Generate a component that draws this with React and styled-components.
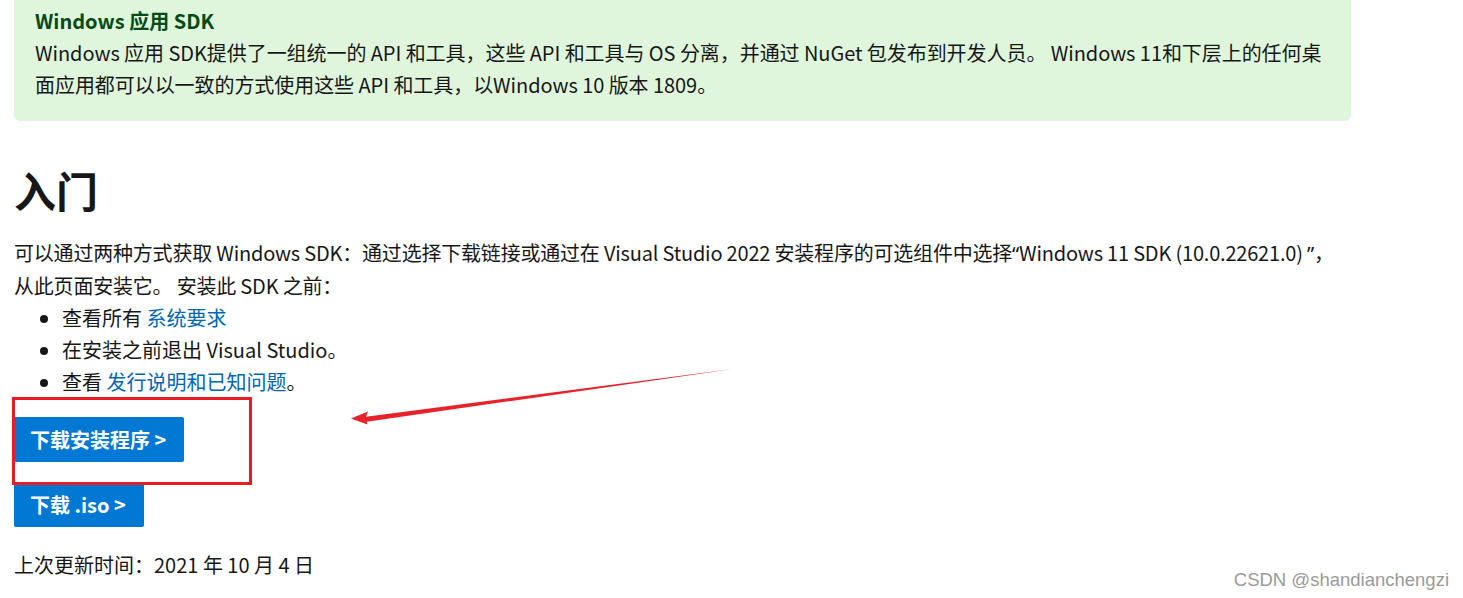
import styled, { createGlobalStyle } from 'styled-components';

const GlobalStyles = createGlobalStyle`
    html, body {
        margin: 0;
        padding: 0;
        background: #ffffff;
    }
    body {
        font-family: 'Noto Sans CJK SC', 'Noto Sans', sans-serif;
        color: #171717;
    }
`;

const App = () => {
    return (
        <>
            <GlobalStyles />
            <Page>
                <Alert>
                    <AlertTitle>Windows 应用 SDK</AlertTitle>
                    <AlertText>
                        Windows 应用 SDK提供了一组统一的 API 和工具，这些 API 和工具与 OS 分离，并通过 NuGet 包发布到开发人员。 Windows 11和下层上的任何桌
                        <br />
                        面应用都可以以一致的方式使用这些 API 和工具，以Windows 10 版本 1809。
                    </AlertText>
                </Alert>

                <Heading>入门</Heading>
                <Paragraph>
                    可以通过两种方式获取 Windows SDK：通过选择下载链接或通过在 Visual Studio 2022 安装程序的可选组件中选择<Quote>“</Quote>Windows 11 SDK (10.0.22621.0) <Quote>”</Quote>，
                    <br />
                    从此页面安装它。 安装此 SDK 之前：
                </Paragraph>
                <List>
                    <li>
                        查看所有 <Link href="#">系统要求</Link>
                    </li>
                    <li>在安装之前退出 Visual Studio。</li>
                    <li>
                        查看 <Link href="#">发行说明和已知问题</Link>。
                    </li>
                </List>

                <Buttons>
                    <Button href="#">下载安装程序 &gt;</Button>
                    <Button href="#">下载 .iso &gt;</Button>
                </Buttons>

                <Updated>上次更新时间：2021 年 10 月 4 日</Updated>

                <Highlight />
                <Arrow width="400" height="70" viewBox="0 0 400 70">
                    <path d="M383 1 L14 49 L15 54 Z" fill="#e8222a" />
                    <path d="M1 50.5 L18 43.5 L15.5 50 L17.5 56.5 Z" fill="#e8222a" />
                </Arrow>
                <Watermark>CSDN @shandianchengzi</Watermark>
            </Page>
        </>
    );
};

export default App;

const Page = styled.main`
    position: relative;
    width: 1463px;
    height: 598px;
    overflow: hidden;
    padding: 0 14px;
    box-sizing: border-box;
    font-size: 20px;
    line-height: 32px;
`;

const Alert = styled.section`
    margin-top: -8px;
    width: 1337px;
    box-sizing: border-box;
    padding: 13px 21px 20px 21px;
    background-color: #dff6dd;
    border-radius: 6px;
`;

const AlertTitle = styled.p`
    margin: 0;
    color: #054b16;
    font-weight: 600;
`;

const AlertText = styled.p`
    margin: 0;
    white-space: nowrap;
    letter-spacing: -0.06px;
`;

const Heading = styled.h1`
    margin: 41px 0 20px 0;
    font-size: 42px;
    line-height: 55px;
    font-weight: 700;
    color: #171717;
`;

const Paragraph = styled.p`
    margin: 0;
    white-space: nowrap;
    letter-spacing: -0.2px;
`;

const Quote = styled.span`
    font-family: 'Noto Sans', sans-serif;
`;

const List = styled.ul`
    margin: 0;
    padding-left: 48px;
    list-style: disc;
`;

const Link = styled.a`
    color: #0065b3;
    text-decoration: none;
`;

const Buttons = styled.div`
    display: flex;
    flex-direction: column;
    align-items: flex-start;
    gap: 20px;
    margin-top: 19px;
`;

const Button = styled.a`
    display: inline-flex;
    align-items: center;
    height: 45px;
    padding: 0 18px 0 16px;
    background-color: #0078d4;
    color: #ffffff;
    font-weight: 700;
    font-size: 20px;
    text-decoration: none;
    border-radius: 2px;
`;

const Updated = styled.p`
    margin: 22px 0 0 0;
`;

const Highlight = styled.div`
    position: absolute;
    left: 12px;
    top: 397px;
    width: 240px;
    height: 88px;
    box-sizing: border-box;
    border: 3px solid #e81c24;
`;

const Arrow = styled.svg`
    position: absolute;
    left: 350px;
    top: 368px;
`;

const Watermark = styled.div`
    position: absolute;
    right: 14px;
    bottom: 8px;
    font-family: 'Liberation Sans', Arial, sans-serif;
    font-size: 18.5px;
    line-height: 20px;
    color: #9a9a9a;
`;
